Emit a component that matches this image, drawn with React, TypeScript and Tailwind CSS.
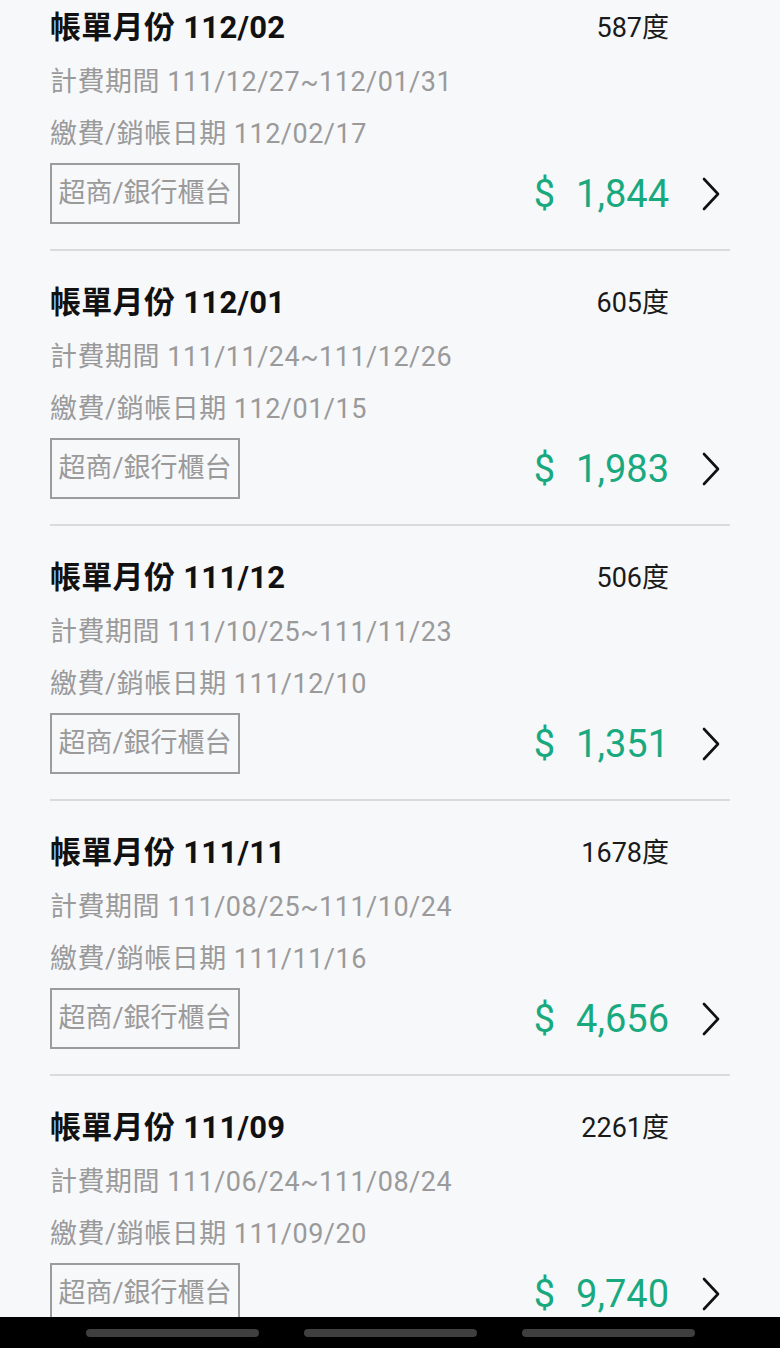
// Electricity bill history list — one card per billing month, scrolled so the
// first card's top is slightly cut off, with the Android nav bar at the bottom.

type Bill = {
  month: string
  kwh: string
  period: string
  paid: string
  amount: string
}

const BILLS: Bill[] = [
  { month: '112/02', kwh: '587度', period: '111/12/27~112/01/31', paid: '112/02/17', amount: '1,844' },
  { month: '112/01', kwh: '605度', period: '111/11/24~111/12/26', paid: '112/01/15', amount: '1,983' },
  { month: '111/12', kwh: '506度', period: '111/10/25~111/11/23', paid: '111/12/10', amount: '1,351' },
  { month: '111/11', kwh: '1678度', period: '111/08/25~111/10/24', paid: '111/11/16', amount: '4,656' },
  { month: '111/09', kwh: '2261度', period: '111/06/24~111/08/24', paid: '111/09/20', amount: '9,740' },
]

function Chevron() {
  return (
    <svg width="20" height="34" viewBox="0 0 20 34" fill="none" className="shrink-0">
      <polyline points="3,2 17,17 3,32" stroke="#111" strokeWidth="2.6" strokeLinecap="round" strokeLinejoin="round" />
    </svg>
  )
}

function BillRow({ bill }: { bill: Bill }) {
  return (
    <div className="pt-[26px] pb-[25px] border-b-2 border-[#dadbdd]">
      <div className="flex items-center justify-between">
        <div className="text-[31px] font-bold leading-[52px] tracking-[0.3px] text-[#111]">帳單月份 {bill.month}</div>
        <div className="text-[27px] leading-[52px] text-[#1a1a1a] mr-[61px]">{bill.kwh}</div>
      </div>
      <div className="mt-[2px] text-[27px] leading-[52px] tracking-[0.5px] text-[#9a9a9a]">
        <div>計費期間 {bill.period}</div>
        <div>繳費/銷帳日期 {bill.paid}</div>
      </div>
      <div className="mt-[3px] flex items-center justify-between">
        <div className="h-[61px] w-[190px] border-2 border-[#9c9c9c] flex items-center justify-center text-[27px] text-[#9a9a9a]">
          超商/銀行櫃台
        </div>
        <div className="flex items-center">
          <span className="text-[38px] text-[#19a97f] leading-none">
            <span className="mr-[21px]">$</span>
            {bill.amount}
          </span>
          <div className="w-[61px] flex justify-end pr-[9px]">
            <Chevron />
          </div>
        </div>
      </div>
    </div>
  )
}

export default function App() {
  return (
    <div
      className="h-[1348px] w-[780px] flex flex-col overflow-hidden bg-[#f7f8fa]"
      style={{ fontFamily: 'Roboto, "Noto Sans CJK TC", sans-serif' }}
    >
      <div className="flex-1 overflow-hidden px-[50px]">
        <div className="-mt-[24px]">
          {BILLS.map(b => (
            <BillRow key={b.month} bill={b} />
          ))}
        </div>
      </div>
      <div className="h-[31px] bg-black flex items-center justify-center gap-[45px]">
        <div className="h-[8px] w-[173px] rounded-full bg-[#3f3f3f]" />
        <div className="h-[8px] w-[173px] rounded-full bg-[#3f3f3f]" />
        <div className="h-[8px] w-[173px] rounded-full bg-[#3f3f3f]" />
      </div>
    </div>
  )
}
